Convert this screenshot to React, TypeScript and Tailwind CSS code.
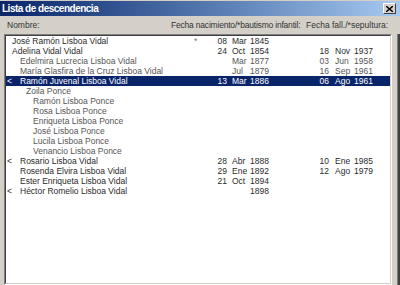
const font = { fontFamily: '"Liberation Sans", Arial, sans-serif' };

type Row = {
  name: string;
  level: 0 | 1 | 2 | 3;
  mark?: boolean;
  star?: boolean;
  dim?: boolean;
  selected?: boolean;
  birth?: [string, string, string];
  death?: [string, string, string];
};

const rows: Row[] = [
  { name: 'José Ramón Lisboa Vidal', level: 0, star: true, birth: ['08', 'Mar', '1845'] },
  { name: 'Adelina Vidal Vidal', level: 0, birth: ['24', 'Oct', '1854'], death: ['18', 'Nov', '1937'] },
  { name: 'Edelmira Lucrecia Lisboa Vidal', level: 1, dim: true, birth: ['', 'Mar', '1877'], death: ['03', 'Jun', '1958'] },
  { name: 'María Glasfira de la Cruz Lisboa Vidal', level: 1, dim: true, birth: ['', 'Jul', '1879'], death: ['16', 'Sep', '1961'] },
  { name: 'Ramón Juvenal Lisboa Vidal', level: 1, mark: true, selected: true, birth: ['13', 'Mar', '1886'], death: ['06', 'Ago', '1961'] },
  { name: 'Zoila Ponce', level: 2, dim: true },
  { name: 'Ramón Lisboa Ponce', level: 3, dim: true },
  { name: 'Rosa Lisboa Ponce', level: 3, dim: true },
  { name: 'Enriqueta Lisboa Ponce', level: 3, dim: true },
  { name: 'José Lisboa Ponce', level: 3, dim: true },
  { name: 'Lucila Lisboa Ponce', level: 3, dim: true },
  { name: 'Venancio Lisboa Ponce', level: 3, dim: true },
  { name: 'Rosario Lisboa Vidal', level: 1, mark: true, birth: ['28', 'Abr', '1888'], death: ['10', 'Ene', '1985'] },
  { name: 'Rosenda Elvira Lisboa Vidal', level: 1, birth: ['29', 'Ene', '1892'], death: ['12', 'Ago', '1979'] },
  { name: 'Ester Enriqueta Lisboa Vidal', level: 1, birth: ['21', 'Oct', '1894'] },
  { name: 'Héctor Romelio Lisboa Vidal', level: 1, mark: true, birth: ['', '', '1898'] },
];

const indent = ['pl-0', 'pl-[8px]', 'pl-[14px]', 'pl-[21px]'];

function ListRow({ r }: { r: Row }) {
  const tone = r.selected
    ? 'bg-[#0a246a] text-white'
    : r.dim
      ? 'text-[#555]'
      : 'text-[#2a2a2a]';
  return (
    <div className={`flex h-[10px] items-center whitespace-nowrap leading-[10px] ${tone}`}>
      <div className="flex w-[186px]">
        <span className="w-[6px] pl-[1px]">{r.mark ? '<' : ''}</span>
        <span className={indent[r.level]}>{r.name}</span>
      </div>
      <span className="w-[8px] pl-[2px] text-[#777]">{r.star ? '*' : ''}</span>
      <span className="w-[27px] text-right">{r.birth?.[0]}</span>
      <span className="ml-[5px] w-[18px]">{r.birth?.[1]}</span>
      <span className="w-[20px]">{r.birth?.[2]}</span>
      <span className="w-[59px] text-right">{r.death?.[0]}</span>
      <span className="ml-[6px] w-[19px]">{r.death?.[1]}</span>
      <span className="w-[20px]">{r.death?.[2]}</span>
    </div>
  );
}

export default function App() {
  return (
    <div className="flex h-[285px] w-[400px] flex-col overflow-hidden bg-[#d4d0c8] text-[8.5px]" style={font}>
      <div className="flex h-[16px] items-center justify-between border-t border-[#d4d0c8] bg-gradient-to-r from-[#0a246a] to-[#a6caf0] pl-[2px] pr-[4px]">
        <span className="text-[10px] font-bold tracking-[-0.5px] text-white">Lista de descendencia</span>
        <button className="flex h-[11px] w-[13px] items-center justify-center border border-t-white border-l-white border-r-[#404040] border-b-[#404040] bg-[#d4d0c8]">
          <svg width="7" height="6" viewBox="0 0 7 6">
            <path d="M0 0 L7 6 M7 0 L0 6" stroke="#000" strokeWidth="1.4" />
          </svg>
        </button>
      </div>
      <div className="flex h-[18px] items-center whitespace-nowrap pl-[7px] pt-[1px] text-[#333]">
        <span className="w-[164px]">Nombre:</span>
        <span className="w-[135px] tracking-[-0.2px]">Fecha nacimiento/*bautismo infantil:</span>
        <span>Fecha fall./*sepultura:</span>
      </div>
      <div className="flex flex-1">
        <div className="ml-[4px] w-[388px] border border-t-[#808080] border-l-[#808080] border-r-white border-b-white">
          <div className="h-full border border-t-[#404040] border-l-[#404040] border-r-[#d4d0c8] border-b-[#d4d0c8] bg-white">
            {rows.map((r) => (
              <ListRow key={r.name} r={r} />
            ))}
          </div>
        </div>
        <div className="ml-auto w-[3px] border-l border-[#808080] bg-[#404040]" />
      </div>
    </div>
  );
}
